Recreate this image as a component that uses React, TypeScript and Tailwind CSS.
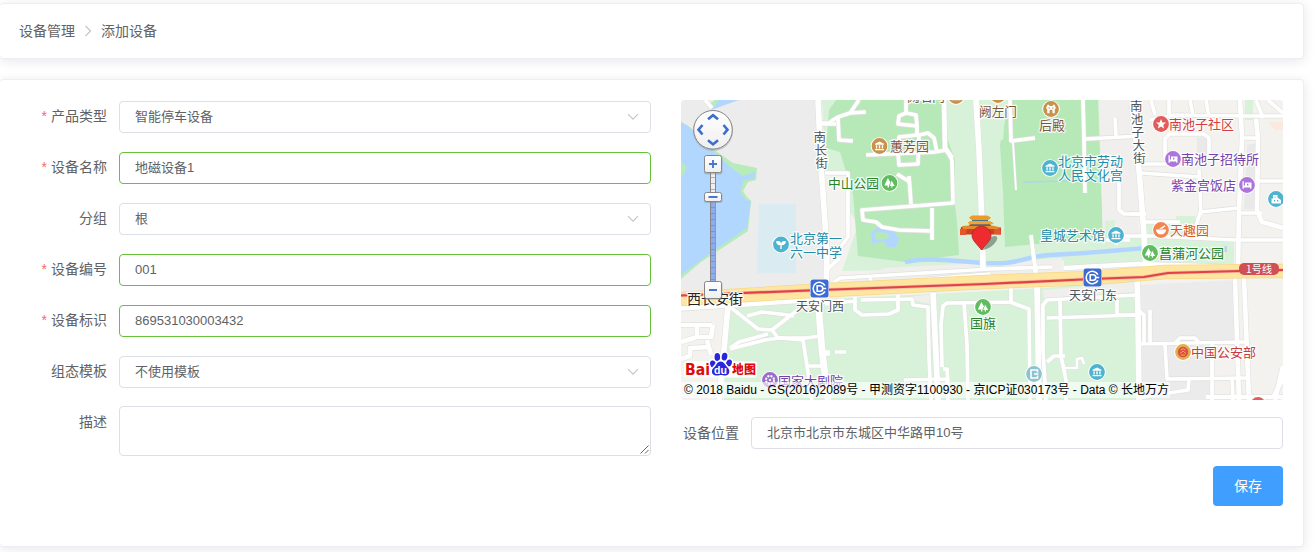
import type { ReactNode } from "react";

type Kind = "select" | "input" | "textarea";
type Field = { label: string; value: string; kind: Kind; required?: boolean };

const FIELDS: Field[] = [
  { label: "产品类型", value: "智能停车设备", kind: "select", required: true },
  { label: "设备名称", value: "地磁设备1", kind: "input", required: true },
  { label: "分组", value: "根", kind: "select" },
  { label: "设备编号", value: "001", kind: "input", required: true },
  { label: "设备标识", value: "869531030003432", kind: "input", required: true },
  { label: "组态模板", value: "不使用模板", kind: "select" },
  { label: "描述", value: "", kind: "textarea" },
];

function Card({ className, children }: { className: string; children: ReactNode }) {
  return (
    <section className={"w-[1304px] rounded border border-l-0 border-[#ebeef5] bg-white shadow-[0_2px_12px_0_rgba(0,0,0,0.1)] " + className}>
      {children}
    </section>
  );
}

function FormRow({ field }: { field: Field }) {
  const { label, value, kind, required } = field;
  return (
    <div className="flex">
      <div className="h-8 w-[119px] shrink-0 pr-3 text-right text-sm leading-[30px]">
        {required && <span className="mr-1 text-[#f56c6c]">*</span>}
        {label}
      </div>
      {kind === "textarea" ? (
        <div className="relative -mt-px h-[50px] flex-1 rounded border border-[#dcdfe6]">
          <svg className="absolute right-px bottom-px" width="9" height="9" viewBox="0 0 9 9" stroke="#555" strokeWidth="0.9">
            <path d="M0.5 8.5L8.5 0.5M5 8.5L8.5 5" />
          </svg>
        </div>
      ) : (
        <div
          className={
            "flex h-8 flex-1 items-center justify-between rounded border pr-[11px] pl-[15px] text-[13px] leading-[30px] " +
            (kind === "input" ? "border-[#67c23a]" : "border-[#dcdfe6]")
          }
        >
          <span>{value}</span>
          {kind === "select" && (
            <svg width="12" height="8" viewBox="0 0 12 8" fill="none" stroke="#c0c4cc" strokeWidth="1.1">
              <path d="M1 1.2L6 6.2L11 1.2" />
            </svg>
          )}
        </div>
      )}
    </div>
  );
}

/* Areas and roads use one coordinate space whose origin is the map's viewBox origin (681, 100). */
const AREAS: [string, string][] = [
  ["#ececec", "M681 100H820L828 285L681 293Z"],
  ["#b7ebb9", "M681 122L690 127L713 149L733 163L757 168L756 180L748 182L743 191L747 197L751 201L748 231L701 262L681 279Z"],
  ["#b2d7ff", "M681 122L688 126L712 150L729 166L743 176L755 172L754 179L744 180L740 192L746 200L751 201L747 228L712 252L681 275Z"],
  ["#b7ebb9", "M681 161L687 168L681 178Z"],
  ["#b7ebb9", "M707 106L715 100H720L711 109Z"],
  ["#b2d7ff", "M711 110L719 100H739Z"],
  ["#daecf1", "M759 204H796V273H757Z"],
  ["#d8f2da", "M822 100H1110V255L1000 268L842 271L858 225L826 172Z"],
  ["#b7e9b8", "M836 100H944L948 140L955 160L955 205L957 222L959 255L905 262L858 256L853 195L840 152L826 148L829 110Z"],
  ["#b7e9b8", "M1009 100H1098L1103 238L1005 247L1003 193L1000 145Z"],
  ["#d8f2da", "M995 110L1005 115L1003 140L992 138Z"],
  ["#f3f2ef", "M820 173H849V240L843 247L825 270Z"],
  ["#f0efed", "M1099 100H1283V275H1104Z"],
  ["#f3f2ef", "M1135 100H1283V273H1140Z"],
  ["#f0efed", "M885 268L1000 262L1062 258V272L840 286Z"],
  ["#d8f2da", "M1105 221L1115 220V237L1145 236L1146 222H1176V216H1195V238H1234V264L1064 268V254L1105 244Z"],
  ["#e9e9e9", "M1247 145L1257 143V209H1244Z"],
  ["#e9e9e9", "M1197 137L1208 138V160H1197Z"],
  ["#d8f2da", "M1245 100H1253V120H1245Z"],
  ["#fae9dc", "M1268 122H1283V130H1275Z"],
  ["#f3f2ef", "M681 305H732L722 400H681Z"],
  ["#d8f2da", "M729 303L850 298L1045 288L1136 280V400H724Z"],
  ["#f0efed", "M890 299L936 294L937 305L912 300Z"],
  ["#f0efed", "M1043 290L1135 282V292L1044 298Z"],
  ["#ebebeb", "M1138 285L1235 280V340L1214 342V400H1141Z"],
  ["#f3f2ef", "M1246 277H1283V400H1246Z"],
  ["#b2d7ff", "M871 232L877 228L893 229L899 239L896 247L889 248L883 241L872 244Z"],
  ["#b7e9b8", "M876 232L888 233L889 238L882 240L875 239Z"],
  ["#bdd4e8", "M1142 248H1154V252H1142ZM1209 249L1227 246V252H1209Z"],
];

const ROADS: [number, string][] = [
  [5, "M818 100L821 165L827 252L826 292"],
  [3, "M820 124H836M825 173L848 173V237L840 248M826 270L840 258M705 100L712 108"],
  [3, "M859 100L850 113L838 117L830 122M850 113L866 112M838 117L839 140L853 141M830 123H820"],
  [3, "M906 100V113L899 116L898 124L917 126L916 115L906 113M917 126V135L899 137L898 153L899 165L918 164L919 135L928 133L934 138L937 152"],
  [3, "M866 155L935 152L947 150L952 160L953 203L862 210L863 220L876 222L882 227L899 230L932 231M932 208V240M909 176L911 204M897 174L910 182"],
  [4, "M944 100L945 148L952 158"],
  [5, "M976 100L979 150L982 225L983 268"],
  [3, "M1010 100L1011 141L1035 138"],
  [1, "M1013 142L1016 190"],
  [3, "M1083 100L1084 139L1085 193M1085 139L1140 136M1115 118L1116 136M1031 235L1035 268"],
  [5, "M1132 100L1139 170L1143 220L1146 270"],
  [3, "M1119 180V210L1124 214H1143M1143 164H1166M1141 173L1199 177M1165 158V139L1169 134H1204L1209 138V160M1199 170L1201 215"],
  [3, "M1151 100L1155 115M1169 100V117M1190 100L1193 115M1206 100L1209 117M1150 120L1175 115L1242 116H1283"],
  [4, "M1240 100L1242 137L1239 210L1238 272M1256 119L1258 138L1257 210L1262 222L1283 228"],
  [3, "M1242 138H1258M1258 181H1283M1200 212L1238 208M1240 213H1262M1201 210L1197 223L1194 239M1130 214H1146M1106 240H1130M1116 245L1118 236H1150L1236 240H1283M1256 100L1263 118M1268 100L1283 113M1145 222L1180 222"],
  [3, "M834 282L840 278L990 269L1052 267M870 278L872 285M927 279L990 274M1033 252L1036 272"],
  [4, "M1035 268L1036 276M1064 268L1138 264L1234 267"],
  [4, "M681 325H712M697 325V337L681 342M697 337H711L713 325M711 355L707 340M681 359L690 356V348L710 347"],
  [5, "M728 305L724 350L719 400"],
  [3, "M729 306L758 329L772 330L795 312L810 304L844 300M747 316L762 312L780 314L794 316M772 330L778 338L806 338L820 336M730 348L739 342L768 334"],
  [3, "M730 349L765 340L780 338L803 340L808 372L812 400M808 366H824"],
  [6, "M818 300L822 350L828 400"],
  [3, "M825 304L856 301M855 297V310L862 315L889 314L898 310V295M861 300L912 299L913 305L928 307L929 358L931 400M835 352H846"],
  [5, "M933 293L936 356L938 400M820 353H830"],
  [3, "M942 367L941 325L943 306L947 303L1010 302L1029 309L1030 400M964 302L967 345L968 400M943 369L947 369L948 382M904 380L947 379L948 400M1011 288V302"],
  [5, "M1037 285L1039 400"],
  [3, "M1046 400L1043 350L1043 305L1047 300L1137 295M1047 318L1137 315M1060 301L1061 356L1066 380V400M1047 362L1054 356H1065"],
  [2, "M1065 368H1077V359L1082 358L1084 364"],
  [5, "M1137 277L1138 313L1139 400"],
  [3, "M1117 300V315H1137M1138 310L1144 315V343M1150 310V343M1138 344L1245 342M1175 343L1180 338H1195L1199 343M1165 344L1167 379L1249 378M1189 379L1188 390L1138 398M1212 343V400M1232 378L1233 400"],
  [4, "M1235 278L1239 400M1244 278L1249 400M1206 397H1283M1283 366L1275 400M1273 398L1283 378"],
  [5, "M681 308L712 306L820 299"],
];

type Poi = { x: number; y: number; color: string; art: "hall" | "tree" | "star" | "bed" | "leaf" | "bowl" | "sun" | "exit" | "badge" | "house" | "gate" };
const POIS: Poi[] = [
  { x: 879.5, y: 146, color: "#c9924c", art: "hall" },
  { x: 956, y: 96, color: "#c9924c", art: "hall" },
  { x: 998, y: 95, color: "#c9924c", art: "hall" },
  { x: 1051, y: 109, color: "#c9924c", art: "gate" },
  { x: 889.5, y: 183, color: "#60bc5e", art: "tree" },
  { x: 983, y: 307, color: "#60bc5e", art: "tree" },
  { x: 1150, y: 253, color: "#60bc5e", art: "tree" },
  { x: 781, y: 244.5, color: "#4db3cf", art: "leaf" },
  { x: 1050, y: 168, color: "#4db3cf", art: "hall" },
  { x: 1116, y: 235, color: "#4db3cf", art: "hall" },
  { x: 1097, y: 372, color: "#4db3cf", art: "hall" },
  { x: 1034, y: 374, color: "#8dc3d0", art: "exit" },
  { x: 1276, y: 199, color: "#4db3cf", art: "house" },
  { x: 1161, y: 124, color: "#e25d59", art: "star" },
  { x: 1173, y: 159, color: "#ab75dc", art: "bed" },
  { x: 1247, y: 185, color: "#ab75dc", art: "bed" },
  { x: 1161, y: 230, color: "#f38650", art: "bowl" },
  { x: 770, y: 380, color: "#9a6dcb", art: "sun" },
  { x: 1183, y: 352, color: "#e1b04a", art: "badge" },
  { x: 1258, y: 405, color: "#e25d59", art: "star" },
];

const ART: Record<Poi["art"], ReactNode> = {
  hall: <path fill="#fff" d="M-4.5 -2.2L0 -4.6L4.5 -2.2V-1.2H-4.5ZM-3.6 -0.7H-2.3V2.6H-3.6ZM-0.7 -0.7H0.7V2.6H-0.7ZM2.3 -0.7H3.6V2.6H2.3ZM-4.5 3H4.5V4.2H-4.5Z" />,
  gate: <path fill="#fff" fillRule="evenodd" d="M-5 -0.8L-3.5 -4.2H-1.8V-3H1.8V-4.2H3.5L5 -0.8L3.8 0V4.2H1.5V2A1.5 1.5 0 0 0 -1.5 2V4.2H-3.8V0ZM-2.6 -1.6V-0.4H-1V-1.6ZM1 -1.6V-0.4H2.6V-1.6Z" />,
  tree: <path fill="#fff" d="M-1.6 -5L1 -0.5L-0.6 2.6V4.5H-1.9V2.6H-5.2ZM2 -2.6L5.2 3H3V4.5H1.8V3H0.2L1.6 -0.5Z" />,
  star: <path fill="#fff" d="M0 -5L1.4 -1.6L5 -1.4L2.2 1L3.1 4.4L0 2.5L-3.1 4.4L-2.2 1L-5 -1.4L-1.4 -1.6Z" />,
  bed: <path fill="#fff" d="M-4.5 -3.8H-3.2V0.6H-2V-2.5H4.5V3.8H3.2V2.4H-3.2V3.8H-4.5ZM0 -1.3V0.6H1.4V-1.3Z" />,
  leaf: <path fill="#fff" d="M-5 -3C-2 -4 0 -3 0 -0.8C0.5 -3 2.5 -4 5 -3C4.5 0 2.5 1 0.7 0.6V4.5H-0.7V0.6C-2.5 1 -4.5 0 -5 -3Z" />,
  bowl: <path fill="#fff" d="M-5 -0.5H5C5 2 3.5 3.5 2 4.3H-2C-3.5 3.5 -5 2 -5 -0.5ZM-2 -1.3L3.8 -4.8L4.4 -3.8L1.2 -1.3Z" />,
  sun: <g fill="none" stroke="#fff"><circle r="4" strokeDasharray="2 1.14" strokeWidth="2" /><circle r="0.8" fill="#fff" /></g>,
  exit: <path fill="none" stroke="#fff" strokeWidth="1.6" d="M3.5 -1.5V-4H-3V4H3.5V1.5M0 0H4.5" />,
  badge: <g><circle r="5.2" fill="#dc4c45" /><path d="M-3 1.5L0 -1L3 1.5M-2 3H2M-2.5 -2L0 -3.4L2.5 -2" stroke="#f3b04c" fill="none" /></g>,
  house: <path fill="#fff" d="M-4.5 -0.5H-3V-4H1.5V-1.5L5 1V4.5H-4.5ZM-1.5 -2.5V-1.5H-0.4V-2.5ZM-2 1V2.5H-0.8V1ZM1 1V2.5H2.2V1Z" fillRule="evenodd" />,
};

const CYAN = "#228da9";
const BROWN = "#81543e";
const GREEN = "#268329";
const GRAY = "#4f5557";
const PURPLE = "#7541ac";

type MapLabel = { x: number; y: number; w: number; text: string; color: string };
const LABELS: MapLabel[] = [
  { x: 907, y: 101, w: 38, text: "阙右门", color: BROWN },
  { x: 979, y: 116, w: 38, text: "阙左门", color: BROWN },
  { x: 1039, y: 130, w: 26, text: "后殿", color: BROWN },
  { x: 890, y: 151, w: 39, text: "蕙芳园", color: BROWN },
  { x: 828, y: 188, w: 51, text: "中山公园", color: GREEN },
  { x: 790, y: 243, w: 52, text: "北京第一", color: CYAN },
  { x: 790, y: 256.5, w: 52, text: "六一中学", color: CYAN },
  { x: 1058, y: 166, w: 65, text: "北京市劳动", color: CYAN },
  { x: 1058, y: 180, w: 65, text: "人民文化宫", color: CYAN },
  { x: 1040, y: 240, w: 65, text: "皇城艺术馆", color: CYAN },
  { x: 1169, y: 129, w: 65, text: "南池子社区", color: "#d33c41" },
  { x: 1181, y: 164, w: 78, text: "南池子招待所", color: PURPLE },
  { x: 1171, y: 190, w: 65, text: "紫金宫饭店", color: PURPLE },
  { x: 1170, y: 235, w: 39, text: "天趣园", color: "#d65a28" },
  { x: 1159, y: 258, w: 65, text: "菖蒲河公园", color: GREEN },
  { x: 796, y: 311, w: 48, text: "天安门西", color: GRAY },
  { x: 1069, y: 300, w: 48, text: "天安门东", color: GRAY },
  { x: 970, y: 328, w: 26, text: "国旗", color: GREEN },
  { x: 1191, y: 357, w: 65, text: "中国公安部", color: "#c83b42" },
  { x: 778, y: 385.5, w: 65, text: "国家大剧院", color: PURPLE },
  { x: 687, y: 304, w: 56, text: "西长安街", color: "#222" },
];

type Street = { chars: string; x: number; y: number; dx: number; dy: number };
const STREETS: Street[] = [
  { chars: "南长街", x: 813.5, y: 142, dx: 1, dy: 13 },
  { chars: "南池子大街", x: 1130, y: 110.5, dx: 0.8, dy: 13 },
];

function MetroMark({ x, y }: { x: number; y: number }) {
  return (
    <g transform={`translate(${x} ${y})`}>
      <rect x="-9.5" y="-9.5" width="19" height="19" rx="2.5" fill="#fff" />
      <rect x="-9" y="-9" width="18" height="18" rx="2.5" fill="#3c6cd2" />
      <g fill="none" stroke="#fff" strokeWidth="1.6">
        <path d="M5.4 -2.8A6.2 6.2 0 1 0 5.4 2.8" />
        <path d="M-2.3 -2.7H0.6A2.7 2.7 0 0 1 0.6 2.7H-2.3ZM3 0H6.7" />
      </g>
    </g>
  );
}

function MapDrawing() {
  return (
    <svg className="block" width="602" height="300" viewBox="681 100 602 300" fontFamily="'Noto Sans CJK SC', sans-serif">
      <rect x="681" y="100" width="602" height="300" fill="#f3f2ef" />
      {AREAS.map(([fill, d], i) => (
        <path key={i} d={d} fill={fill} />
      ))}
      <path d="M905 262C930 257 950 261 985 263S1025 256 1050 255S1100 252 1145 248" fill="none" stroke="#b2d5ff" strokeWidth="4.5" />
      <path d="M1023 182L1070 181" stroke="#a8d8ee" strokeWidth="1.5" />
      <g fill="none" stroke="#dfe1dd" strokeLinejoin="round">
        {ROADS.map(([w, d], i) => (
          <path key={i} d={d} strokeWidth={w + 1.8} />
        ))}
      </g>
      <g fill="none" stroke="#fff" strokeLinejoin="round">
        {ROADS.map(([w, d], i) => (
          <path key={i} d={d} strokeWidth={w + 0.7} />
        ))}
      </g>
      <g fill="none" strokeLinejoin="round">
        <path d="M681 299L820 290.5L985 282L1092 278L1165 272L1283 271" stroke="#f7d78b" strokeWidth="14.5" />
        <path d="M681 299L820 290.5L985 282L1092 278L1165 272L1283 271" stroke="#fee6a1" strokeWidth="13" />
        <path d="M681 295.5L820 290L985 284L1092 279L1144 277L1168 273L1240 271L1283 270" stroke="#f6b9a0" strokeWidth="3.4" />
        <path d="M681 295.5L820 290L985 284L1092 279L1144 277L1168 273L1240 271L1283 270" stroke="#df4348" strokeWidth="2.2" />
      </g>
      <rect x="1239" y="263" width="40" height="12" rx="5" fill="#d05055" />
      <text x="1246" y="272.5" fontSize="10" fill="#fff" textLength="26">1号线</text>
      {LABELS.map((l) => (
        <text key={l.text} x={l.x} y={l.y} fontSize={l.w / l.text.length} fill={l.color} stroke="#fff" strokeOpacity="0.85" strokeWidth="2.4" strokeLinejoin="round" paintOrder="stroke">
          {l.text}
        </text>
      ))}
      {STREETS.map((s) =>
        s.chars.split("").map((c, i) => (
          <text key={s.chars + i} x={s.x + s.dx * i} y={s.y + s.dy * i} fontSize="12.5" fill={GRAY} stroke="#fff" strokeWidth="2.4" strokeLinejoin="round" paintOrder="stroke">
            {c}
          </text>
        )),
      )}
      {POIS.map((p, i) => (
        <g key={i} transform={`translate(${p.x} ${p.y})`}>
          <circle r="8.8" fill="#fff" />
          <circle r="7.9" fill={p.color} />
          {ART[p.art]}
        </g>
      ))}
      <MetroMark x={819.5} y={288.5} />
      <MetroMark x={1092.5} y={277.5} />

      {/* Tiananmen landmark and the location pin */}
      <ellipse cx="989" cy="243" rx="10" ry="4" transform="rotate(-38 989 243)" fill="#3f4f42" opacity="0.5" />
      <path d="M961 227L1001 227.5V234.5H960Z" fill="#cf3f22" />
      <path d="M960 229L967 228L966 235H960ZM994 227L1000 228L1001 234.5L994 234Z" fill="#e4562b" />
      <path d="M962 226L969 225.5H992L999 227L998 229H963Z" fill="#e58a2a" />
      <path d="M971 221.5H989L991 226H969Z" fill="#b8481f" />
      <path d="M972 219.5H988V222H972Z" fill="#4b7390" />
      <path d="M969 217.5L972 215.5H987L991 217.5L989 219.8H971Z" fill="#ee9a26" />
      <path d="M968 222L971 221H990L994 223.5L991 224.5H969Z" fill="#f2a52a" />
      <path d="M971 224.8H990" stroke="#4b7390" strokeWidth="0.9" />
      <path d="M981.5 250C978 245 972 240.5 972 235.5A9.5 9.3 0 0 1 991 235.5C991 240.5 985 245 981.5 250Z" fill="#ee2b2f" stroke="#b42224" strokeWidth="0.8" />

      {/* Pan dial */}
      <circle cx="713" cy="131" r="20" fill="#999" opacity="0.45" />
      <circle cx="713" cy="129.8" r="19.3" fill="url(#dial)" stroke="#858585" />
      <path d="M708 119.3L713 115.2L718 119.3M708 140.3L713 144.4L718 140.3M702.5 125L698.5 129.7L702.5 134.5M723.5 125L727.5 129.7L723.5 134.5" fill="none" stroke="#3d6dcc" strokeWidth="2.6" />

      {/* Zoom slider */}
      <rect x="710.5" y="170" width="5" height="115" fill="#eee" stroke="#888" />
      <rect x="711" y="200" width="4.5" height="84" fill="#8eacee" />
      <path d="M711 177.5H715M711 183.5H715M711 189.5H715M711 207.5H715M711 213.5H715M711 219.5H715M711 225.5H715M711 231.5H715M711 237.5H715M711 243.5H715M711 249.5H715M711 255.5H715M711 261.5H715M711 267.5H715M711 273.5H715M711 279.5H715" stroke="#7180a5" strokeOpacity="0.55" />
      <g fill="#777" opacity="0.35">
        <rect x="704" y="156" width="18.5" height="18.5" rx="2" />
        <rect x="704" y="193" width="18.5" height="10" rx="2" />
        <rect x="704" y="282" width="18.5" height="18" rx="2" />
      </g>
      <g fill="url(#dial)" stroke="#878787">
        <rect x="704.5" y="155.5" width="17" height="17" rx="2" />
        <rect x="704.5" y="192.5" width="17" height="9" rx="2" />
        <rect x="704.5" y="281.5" width="17" height="17" rx="2" />
      </g>
      <path d="M709 164H717M713 160V168M708.5 197H717.5M709 290H717" stroke="#4a75d0" strokeWidth="1.9" />
      <defs>
        <linearGradient id="dial" x1="0" y1="0" x2="0" y2="1">
          <stop offset="0" stopColor="#fff" />
          <stop offset="1" stopColor="#efefef" />
        </linearGradient>
      </defs>

      {/* Baidu logo */}
      <rect x="684" y="361.5" width="73" height="16" rx="3" fill="#fff" />
      <g stroke="#fff" strokeWidth="3" strokeLinejoin="round" paintOrder="stroke">
        <text x="685" y="374.5" fontSize="15" fontWeight="bold" fontFamily="'DejaVu Sans', sans-serif" fill="#e00a0a" textLength="25" lengthAdjust="spacingAndGlyphs">Bai</text>
        <text x="732" y="374" fontSize="12" fontWeight="900" fill="#e00a0a" textLength="24">地图</text>
        <g fill="#2a27db">
          <ellipse cx="713" cy="364" rx="2.9" ry="3.6" transform="rotate(-15 713 364)" />
          <ellipse cx="717.3" cy="357" rx="2.8" ry="3.9" />
          <ellipse cx="724.5" cy="356.7" rx="2.8" ry="3.9" transform="rotate(10 724.5 356.7)" />
          <ellipse cx="729" cy="363" rx="2.8" ry="3.6" transform="rotate(20 729 363)" />
          <path d="M720.5 361.5C724 361.5 725 365 727.5 367.5C731 371 729 375.5 725.5 375.5C723 375.5 722 374.8 720 375C718 375.5 716.5 375.8 714.8 375.3C711.3 374.2 711 370 714 367.5C716.5 365.5 717 361.5 720.5 361.5Z" />
        </g>
      </g>
      <text x="720.5" y="373.7" fontSize="10.5" fontWeight="bold" fontFamily="'Liberation Sans', Arial, sans-serif" fill="#fff" textAnchor="middle">du</text>
    </svg>
  );
}

export default function App() {
  return (
    <main className="h-[552px] w-[1314px] overflow-hidden bg-white pt-[3px] font-['Liberation_Sans','Noto_Sans_CJK_SC',sans-serif] text-[#606266]">
      <Card className="flex h-[56px] items-center gap-[9px] pl-[19px] text-sm">
        <span>设备管理</span>
        <svg width="8" height="12" viewBox="0 0 8 12" fill="none" stroke="#c0c4cc" strokeWidth="1.2">
          <path d="M1.5 1L6.5 6L1.5 11" />
        </svg>
        <span>添加设备</span>
      </Card>

      <Card className="mt-5 flex h-[468px] gap-[30px] pt-5">
        <form className="mt-px flex w-[651px] flex-col gap-[19px]">
          {FIELDS.map((field) => (
            <FormRow key={field.label} field={field} />
          ))}
        </form>

        <div className="flex w-[602px] flex-col">
          <div className="relative overflow-hidden rounded">
            <MapDrawing />
            <div className="absolute bottom-0.5 left-0 bg-white/60 pr-px pl-[3px] text-[12px] leading-4 whitespace-nowrap text-black">
              © 2018 Baidu - GS(2016)2089号 - 甲测资字1100930 - 京ICP证030173号 - Data © 长地万方
            </div>
          </div>
          <div className="mt-[17px] flex">
            <div className="w-[70px] pl-0.5 text-sm leading-8">设备位置</div>
            <div className="h-8 flex-1 rounded border border-[#dcdfe6] pl-[15px] text-[13px] leading-[30px]">北京市北京市东城区中华路甲10号</div>
          </div>
          <button type="button" className="mt-[17px] h-10 w-[70px] self-end rounded bg-[#409eff] text-sm text-white">
            保存
          </button>
        </div>
      </Card>
    </main>
  );
}
